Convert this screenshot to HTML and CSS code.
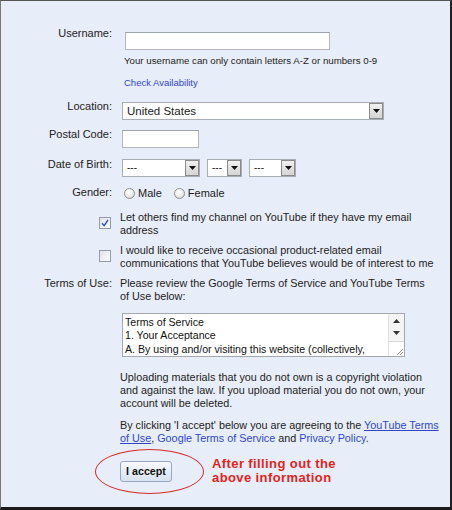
FILE: index.html
```html
<!DOCTYPE html>
<html>
<head>
<meta charset="utf-8">
<link rel="stylesheet" href="styles.css">
</head>
<body>
<div class="frame">
  <div class="row r-user">
    <div class="label">Username:</div>
    <div class="field">
      <div class="input user-input"></div>
      <div class="hint">Your username can only contain letters A-Z or numbers 0-9</div>
      <div class="check"><span class="link">Check Availability</span></div>
    </div>
  </div>

  <div class="row r-loc">
    <div class="label">Location:</div>
    <div class="field">
      <div class="select sel-loc"><span class="val big">United States</span><span class="arrow"><svg width="7" height="4" viewBox="0 0 7 4"><path d="M0 0H7L3.5 4Z" fill="#111"/></svg></span></div>
    </div>
  </div>

  <div class="row r-postal">
    <div class="label">Postal Code:</div>
    <div class="field">
      <div class="input postal-input"></div>
    </div>
  </div>

  <div class="row r-dob">
    <div class="label">Date of Birth:</div>
    <div class="field dob">
      <div class="select sel-m"><span class="val">---</span><span class="arrow"><svg width="7" height="4" viewBox="0 0 7 4"><path d="M0 0H7L3.5 4Z" fill="#111"/></svg></span></div>
      <div class="select sel-d"><span class="val">---</span><span class="arrow"><svg width="7" height="4" viewBox="0 0 7 4"><path d="M0 0H7L3.5 4Z" fill="#111"/></svg></span></div>
      <div class="select sel-y"><span class="val">---</span><span class="arrow"><svg width="7" height="4" viewBox="0 0 7 4"><path d="M0 0H7L3.5 4Z" fill="#111"/></svg></span></div>
    </div>
  </div>

  <div class="row r-gender">
    <div class="label">Gender:</div>
    <div class="field gender">
      <span class="radio"></span><span class="opt">Male</span>
      <span class="radio r2"></span><span class="opt">Female</span>
    </div>
  </div>

  <div class="row r-cb1">
    <div class="label"><span class="cbox checked"><svg width="8" height="8" viewBox="0 0 8 8"><path d="M1 4.2L3.2 6.6L7 0.8" fill="none" stroke="#2c4fa8" stroke-width="1.4"/></svg></span></div>
    <div class="field text">Let others find my channel on YouTube if they have my email<br>address</div>
  </div>

  <div class="row r-cb2">
    <div class="label"><span class="cbox"></span></div>
    <div class="field text">I would like to receive occasional product-related email<br>communications that YouTube believes would be of interest to me</div>
  </div>

  <div class="row r-terms">
    <div class="label">Terms of Use:</div>
    <div class="field text">Please review the Google Terms of Service and YouTube Terms<br>of Use below:
      <div class="tarea">
        <div class="tatext">Terms of Service<br>1. Your Acceptance<br>A. By using and/or visiting this website (collectively,</div>
        <div class="sbar">
          <div class="sb-track">
            <svg class="sb-up" width="7" height="4" viewBox="0 0 7 4"><path d="M0 4H7L3.5 0Z" fill="#333"/></svg>
            <svg class="sb-down" width="7" height="4" viewBox="0 0 7 4"><path d="M0 0H7L3.5 4Z" fill="#333"/></svg>
          </div>
          <div class="sb-grip"><svg width="9" height="9" viewBox="0 0 9 9"><path d="M8 2L2 8M8 5L5 8" stroke="#999" stroke-width="1"/></svg></div>
        </div>
      </div>
      <p class="para p-upload">Uploading materials that you do not own is a copyright violation<br>and against the law. If you upload material you do not own, your<br>account will be deleted.</p>
      <p class="para p-agree">By clicking 'I accept' below you are agreeing to the <span class="link u">YouTube Terms<br>of Use</span>, <span class="link">Google Terms of Service</span> and <span class="link">Privacy Policy</span>.</p>
      <div class="accept-row">
        <div class="btn-wrap">
          <span class="btn">I accept</span>
          <span class="ellipse"></span>
        </div>
        <div class="note">After filling out the<br>above information</div>
      </div>
    </div>
  </div>
</div>
</body>
</html>
```

FILE: styles.css
```css
html, body {
  margin: 0;
  padding: 0;
}
body {
  width: 452px;
  height: 510px;
  font-family: "Liberation Sans", Arial, sans-serif;
  color: #222;
}
.frame {
  width: 452px;
  height: 510px;
  box-sizing: border-box;
  background: #e8eef9;
  border-top: 1px solid #555;
  border-left: 1px solid #777;
  border-right: 2px solid #222;
  border-bottom: 3px solid #1a1a1a;
  padding-top: 26px;
  position: relative;
}
.row {
  display: grid;
  grid-template-columns: 111px 1fr;
  column-gap: 8px;
  font-size: 11px;
  line-height: 13px;
}
.label {
  text-align: right;
  color: #222;
}
.field { min-width: 0; }

.input {
  height: 18px;
  box-sizing: border-box;
  background: #fff;
  border: 1px solid #b4b8be;
  border-top-color: #9da3aa;
}
.user-input {
  width: 205px;
  margin-left: 5px;
  margin-top: 5px;
}
.hint {
  margin-top: 4px;
  margin-left: 4px;
  font-size: 9.7px;
  line-height: 13px;
  height: 13px;
}
.check {
  margin-top: 9px;
  margin-left: 4px;
  font-size: 9.5px;
}
.link { color: #2f46c8; }
.link.u { text-decoration: underline; }

.r-loc { margin-top: 11px; }
.select {
  display: flex;
  height: 18px;
  box-sizing: border-box;
  background: #fff;
  border: 1px solid #a9aeb4;
}
.val {
  flex: 1;
  padding-left: 4px;
  font-size: 10px;
  line-height: 16px;
  color: #222;
}
.val.big { font-size: 11.5px; }
.arrow {
  width: 14px;
  box-sizing: border-box;
  border: 1px solid #8a8a8a;
  background: linear-gradient(#f0f0f0, #d4d4d4);
  display: flex;
  align-items: center;
  justify-content: center;
}
.sel-loc { width: 262px; margin-left: 2px; margin-top: 2px; }

.r-postal { margin-top: 8px; }
.postal-input { width: 77px; margin-left: 2px; margin-top: 2px; }

.r-dob { margin-top: 10px; }
.dob { display: flex; gap: 7px; margin-left: 2px; margin-top: 1px; }
.sel-m { width: 78px; }
.sel-d { width: 35px; }
.sel-y { width: 47px; }

.r-gender { margin-top: 9px; }
.gender { display: flex; align-items: center; padding-left: 4px; padding-top: 1px; font-size: 11px; }
.radio {
  width: 11px;
  height: 11px;
  box-sizing: border-box;
  border-radius: 50%;
  border: 1px solid #8e8f8f;
  background: radial-gradient(circle at 40% 35%, #ffffff 0%, #f1f1f1 40%, #cfcfcf 100%);
}
.opt { margin-left: 3px; }
.radio.r2 { margin-left: 12px; }

.r-cb1 { margin-top: 11px; }
.r-cb2 { margin-top: 7px; }
.cbox {
  display: inline-flex;
  align-items: center;
  justify-content: center;
  width: 12px;
  height: 12px;
  box-sizing: border-box;
  border: 1px solid #8f9cb0;
  background: linear-gradient(135deg, #dfe3ea, #fbfcfd);
  margin-top: 6px;
  vertical-align: top;
}
.r-cb1 .label, .r-cb2 .label { padding-right: 1px; }
.text { font-size: 10.8px; }

.r-terms { margin-top: 7px; }
.tarea {
  display: flex;
  width: 283px;
  height: 44px;
  box-sizing: border-box;
  margin-left: 2px;
  margin-top: 10px;
  background: #fff;
  border: 1px solid #a3a8ae;
}
.tatext {
  flex: 1;
  padding: 2px 0 0 2px;
  font-size: 10.6px;
  line-height: 13.3px;
  overflow: hidden;
  white-space: nowrap;
  color: #111;
}
.sbar {
  width: 15px;
  display: flex;
  flex-direction: column;
  background: #f4f4f4;
  border-left: 1px solid #e2e2e2;
}
.sb-track {
  flex: 1;
  display: flex;
  flex-direction: column;
  align-items: center;
  padding-top: 5px;
  gap: 8px;
  border-bottom: 1px solid #dcdcdc;
}
.sb-grip {
  height: 14px;
  display: flex;
  align-items: flex-end;
  justify-content: flex-end;
  background: #fff;
}

.para { margin: 0; }
.p-upload { margin-top: 14px; }
.p-agree { margin-top: 9px; }

.accept-row {
  display: flex;
  align-items: flex-start;
  margin-top: 16px;
}
.btn-wrap { position: relative; }
.btn {
  display: block;
  width: 52px;
  height: 21px;
  box-sizing: border-box;
  border: 1px solid #97a6c1;
  border-radius: 3px;
  background: linear-gradient(#f7f9fd, #d9e2f1);
  font-weight: bold;
  font-size: 10.7px;
  line-height: 19px;
  text-align: center;
  color: #111;
}
.ellipse {
  position: absolute;
  left: -25px;
  top: -12px;
  width: 107px;
  height: 43px;
  border: 1.5px solid #d42a2a;
  border-radius: 50%;
}
.note {
  margin-left: 40px;
  margin-top: -4px;
  font-family: "Liberation Sans", Arial, sans-serif;
  font-weight: bold;
  font-size: 13px;
  line-height: 14px;
  letter-spacing: 0.4px;
  color: #e0241d;
}
```
